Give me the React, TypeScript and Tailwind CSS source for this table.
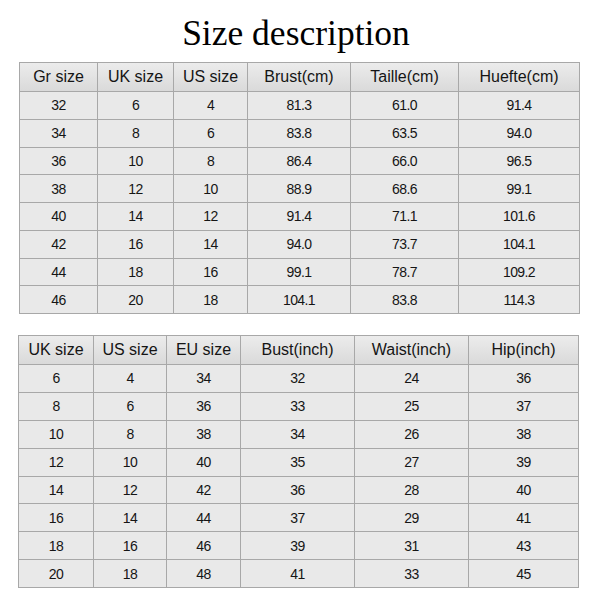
const table1 = {
    widths: [78, 76, 74, 103, 108, 121],
    rowH: 'h-[27.75px]',
    head: ['Gr size', 'UK size', 'US size', 'Brust(cm)', 'Taille(cm)', 'Huefte(cm)'],
    rows: [
        ['32', '6', '4', '81.3', '61.0', '91.4'],
        ['34', '8', '6', '83.8', '63.5', '94.0'],
        ['36', '10', '8', '86.4', '66.0', '96.5'],
        ['38', '12', '10', '88.9', '68.6', '99.1'],
        ['40', '14', '12', '91.4', '71.1', '101.6'],
        ['42', '16', '14', '94.0', '73.7', '104.1'],
        ['44', '18', '16', '99.1', '78.7', '109.2'],
        ['46', '20', '18', '104.1', '83.8', '114.3'],
    ],
};

const table2 = {
    widths: [75, 73, 74, 114, 114, 110],
    rowH: 'h-[27.9px]',
    head: ['UK size', 'US size', 'EU size', 'Bust(inch)', 'Waist(inch)', 'Hip(inch)'],
    rows: [
        ['6', '4', '34', '32', '24', '36'],
        ['8', '6', '36', '33', '25', '37'],
        ['10', '8', '38', '34', '26', '38'],
        ['12', '10', '40', '35', '27', '39'],
        ['14', '12', '42', '36', '28', '40'],
        ['16', '14', '44', '37', '29', '41'],
        ['18', '16', '46', '39', '31', '43'],
        ['20', '18', '48', '41', '33', '45'],
    ],
};

interface SizeTableProps {
    widths: number[];
    rowH: string;
    head: string[];
    rows: string[][];
}

function SizeTable({ widths, rowH, head, rows }: SizeTableProps) {
    return (
        <table className="table-fixed border-collapse border border-[#a8a8a8] text-center font-['Liberation_Sans',Arial,sans-serif] text-[#151515]">
            <colgroup>
                {widths.map((w, i) => (
                    <col key={i} style={{ width: w }} />
                ))}
            </colgroup>
            <thead>
                <tr className="h-[29px] bg-gradient-to-b from-[#ececec] to-[#d9d9d9]">
                    {head.map((h) => (
                        <th key={h} className="border border-[#a8a8a8] p-0 text-[16px] font-normal leading-none">
                            {h}
                        </th>
                    ))}
                </tr>
            </thead>
            <tbody>
                {rows.map((row, r) => (
                    <tr key={r} className={`${rowH} bg-[#e9e9e9]`}>
                        {row.map((c, i) => (
                            <td key={i} className="border border-[#a8a8a8] p-0 text-[14px] leading-none tracking-[-0.6px]">
                                {c}
                            </td>
                        ))}
                    </tr>
                ))}
            </tbody>
        </table>
    );
}

export default function App() {
    return (
        <div className="h-[609px] w-[600px] bg-white">
            <h1 className="pt-[12px] pr-[8px] text-center font-['Liberation_Serif','Times_New_Roman',serif] text-[35.5px] leading-[42px] text-black">
                Size description
            </h1>
            <div className="ml-[19px] mt-[8px]">
                <SizeTable {...table1} />
            </div>
            <div className="ml-[18px] mt-[21px]">
                <SizeTable {...table2} />
            </div>
        </div>
    );
}
